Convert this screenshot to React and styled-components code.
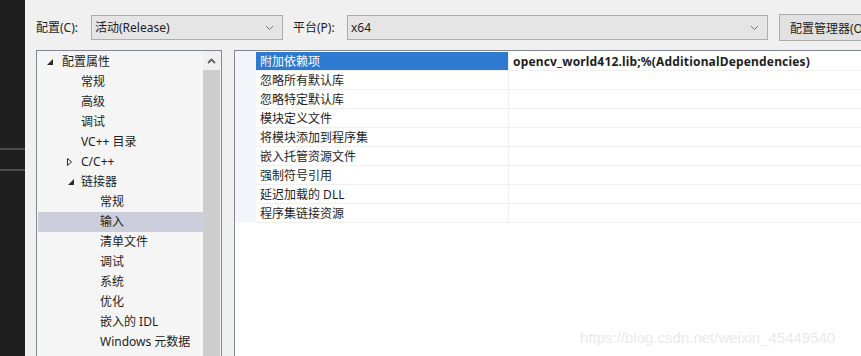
import React from 'react'
import styled, { createGlobalStyle } from 'styled-components'

const GlobalStyle = createGlobalStyle`
  html, body {
    margin: 0;
    padding: 0;
    overflow: hidden;
    background: #f0f0f0;
  }

  body {
    font-family: 'Noto Sans', 'Noto Sans CJK SC', sans-serif;
    font-size: 12px;
    color: #1e1e1e;
  }
`

const Page = styled.div`
  position: relative;

  display: flex;
  flex-flow: row nowrap;

  width: 861px;
  height: 356px;
  overflow: hidden;
`

const DarkStrip = styled.div`
  flex: 0 0 25px;

  padding-top: 148px;

  display: flex;
  flex-flow: column;
  gap: 19px;

  background: #1f1f1f;
`

const StripLine = styled.div`
  height: 2px;
  background: #4c4c4c;
`

const Dialog = styled.div`
  flex: 1 1 auto;
  min-width: 0;

  padding: 14px 0 0 11px;

  display: flex;
  flex-flow: column;
  gap: 9px;
`

const Toolbar = styled.div`
  display: flex;
  flex-flow: row nowrap;
  align-items: center;

  height: 27px;
`

const FieldLabel = styled.span`
  flex: 0 0 ${(p) => p.$width}px;
  margin-left: ${(p) => p.$offset || 0}px;

  line-height: 25px;
  white-space: nowrap;
`

const Combo = styled.div`
  flex: 0 0 ${(p) => p.$width}px;
  box-sizing: border-box;
  height: 25px;

  padding: 0 8px 0 3px;

  display: flex;
  align-items: center;
  justify-content: space-between;

  background: #e5e5e5;
  border: 1px solid #adadad;
`

const ComboText = styled.span`
  line-height: 23px;
  white-space: nowrap;
`

const Button = styled.div`
  flex: 0 0 auto;
  box-sizing: border-box;
  height: 27px;
  margin-left: 11px;

  padding: 0 10px;

  display: flex;
  align-items: center;

  background: #e1e1e1;
  border: 1px solid #adadad;

  white-space: nowrap;
`

const Body = styled.div`
  flex: 1 1 auto;

  display: flex;
  flex-flow: row nowrap;
  gap: 12px;
`

const TreePanel = styled.div`
  flex: 0 0 186px;
  box-sizing: border-box;

  display: flex;
  flex-flow: row nowrap;

  background: #f5f5f5;
  border: 1px solid #828790;
  border-bottom: none;
`

const TreeList = styled.div`
  flex: 1 1 auto;

  padding: 1px 0 0 1px;

  display: flex;
  flex-flow: column;
`

const TreeRow = styled.div`
  height: 20px;

  padding-left: ${(p) => 8 + p.$level * 19}px;

  display: flex;
  align-items: center;

  background: ${(p) => (p.$selected ? '#cccedb' : 'transparent')};

  line-height: 20px;
  white-space: nowrap;
`

const Toggle = styled.svg`
  flex: 0 0 16px;
  margin-left: ${(p) => p.$shift}px;
  margin-right: -${(p) => p.$shift}px;
`

const ScrollBar = styled.div`
  flex: 0 0 17px;

  padding-right: 1px;

  display: flex;
  flex-flow: column;

  background: #f0f0f0;
`

const ScrollArrow = styled.div`
  flex: 0 0 19px;

  display: flex;
  align-items: center;
  justify-content: center;
`

const ScrollThumb = styled.div`
  flex: 1 1 auto;
  background: #cdcdcd;
`

const GridPanel = styled.div`
  flex: 1 1 auto;

  background: #ffffff;
  border-top: 1px solid #828790;
  border-left: 1px solid #828790;
`

const Rows = styled.div`
  padding-top: 1px;
  background: linear-gradient(to right, #f4f5fa 21px, #ffffff 21px);
`

const PropRow = styled.div`
  display: grid;
  grid-template-columns: 21px 253px 1fr;

  height: 19px;
`

const Cell = styled.div`
  box-sizing: border-box;

  padding: 1px 0 0 4px;

  border-bottom: 1px solid #f0f0f0;
  border-right: ${(p) => (p.$label ? '1px solid #f0f0f0' : 'none')};

  background: ${(p) => (p.$active ? '#2f7ad1' : 'transparent')};
  color: ${(p) => (p.$active ? '#ffffff' : '#1e1e1e')};

  font-weight: ${(p) => (p.$bold ? 700 : 400)};
  letter-spacing: ${(p) => (p.$bold ? '0.17px' : 'normal')};
  line-height: 17px;
  white-space: nowrap;
`

const Watermark = styled.div`
  position: absolute;
  left: 580px;
  top: 329px;

  font-family: 'Liberation Sans', Arial, sans-serif;
  font-size: 15px;
  color: #eaeaea;

  pointer-events: none;
`

const Chevron = ({ up }) => (
  <svg width="9" height="6" viewBox="0 0 9 6">
    <polyline
      points={up ? '1,5 4.5,1.5 8,5' : '1,1 4.5,4.5 8,1'}
      fill="none"
      stroke={up ? '#606060' : '#707070'}
      strokeWidth={up ? 1.8 : 1}
    />
  </svg>
)

const TreeToggle = ({ state, level }) => (
  <Toggle width="16" height="20" viewBox="0 0 16 20" $shift={level ? 2 : 0}>
    {state === 'open' && <polygon points="7,7 7,13 1,13" fill="#2a2a2a" />}
    {state === 'closed' && (
      <polygon points="0.5,6.5 4.5,10 0.5,13.5" fill="none" stroke="#2a2a2a" />
    )}
  </Toggle>
)

const treeItems = [
  { text: '配置属性', level: 0, state: 'open' },
  { text: '常规', level: 1 },
  { text: '高级', level: 1 },
  { text: '调试', level: 1 },
  { text: 'VC++ 目录', level: 1 },
  { text: 'C/C++', level: 1, state: 'closed' },
  { text: '链接器', level: 1, state: 'open' },
  { text: '常规', level: 2 },
  { text: '输入', level: 2, selected: true },
  { text: '清单文件', level: 2 },
  { text: '调试', level: 2 },
  { text: '系统', level: 2 },
  { text: '优化', level: 2 },
  { text: '嵌入的 IDL', level: 2 },
  { text: 'Windows 元数据', level: 2 },
]

const props = [
  ['附加依赖项', 'opencv_world412.lib;%(AdditionalDependencies)'],
  ['忽略所有默认库', ''],
  ['忽略特定默认库', ''],
  ['模块定义文件', ''],
  ['将模块添加到程序集', ''],
  ['嵌入托管资源文件', ''],
  ['强制符号引用', ''],
  ['延迟加载的 DLL', ''],
  ['程序集链接资源', ''],
]

const App = () => (
  <Page>
    <GlobalStyle />
    <DarkStrip>
      <StripLine />
      <StripLine />
    </DarkStrip>
    <Dialog>
      <Toolbar>
        <FieldLabel $width={55}>配置(C):</FieldLabel>
        <Combo $width={192}>
          <ComboText>活动(Release)</ComboText>
          <Chevron />
        </Combo>
        <FieldLabel $width={54} $offset={10}>
          平台(P):
        </FieldLabel>
        <Combo $width={421}>
          <ComboText>x64</ComboText>
          <Chevron />
        </Combo>
        <Button>配置管理器(O)...</Button>
      </Toolbar>
      <Body>
        <TreePanel>
          <TreeList>
            {treeItems.map((item, i) => (
              <TreeRow key={i} $level={item.level} $selected={item.selected}>
                <TreeToggle state={item.state} level={item.level} />
                {item.text}
              </TreeRow>
            ))}
          </TreeList>
          <ScrollBar>
            <ScrollArrow>
              <Chevron up />
            </ScrollArrow>
            <ScrollThumb />
          </ScrollBar>
        </TreePanel>
        <GridPanel>
          <Rows>
            {props.map(([name, value], i) => (
              <PropRow key={name}>
                <span />
                <Cell $label $active={i === 0}>
                  {name}
                </Cell>
                <Cell $bold>{value}</Cell>
              </PropRow>
            ))}
          </Rows>
        </GridPanel>
      </Body>
    </Dialog>
    <Watermark>https://blog.csdn.net/weixin_45449540</Watermark>
  </Page>
)

export default App
